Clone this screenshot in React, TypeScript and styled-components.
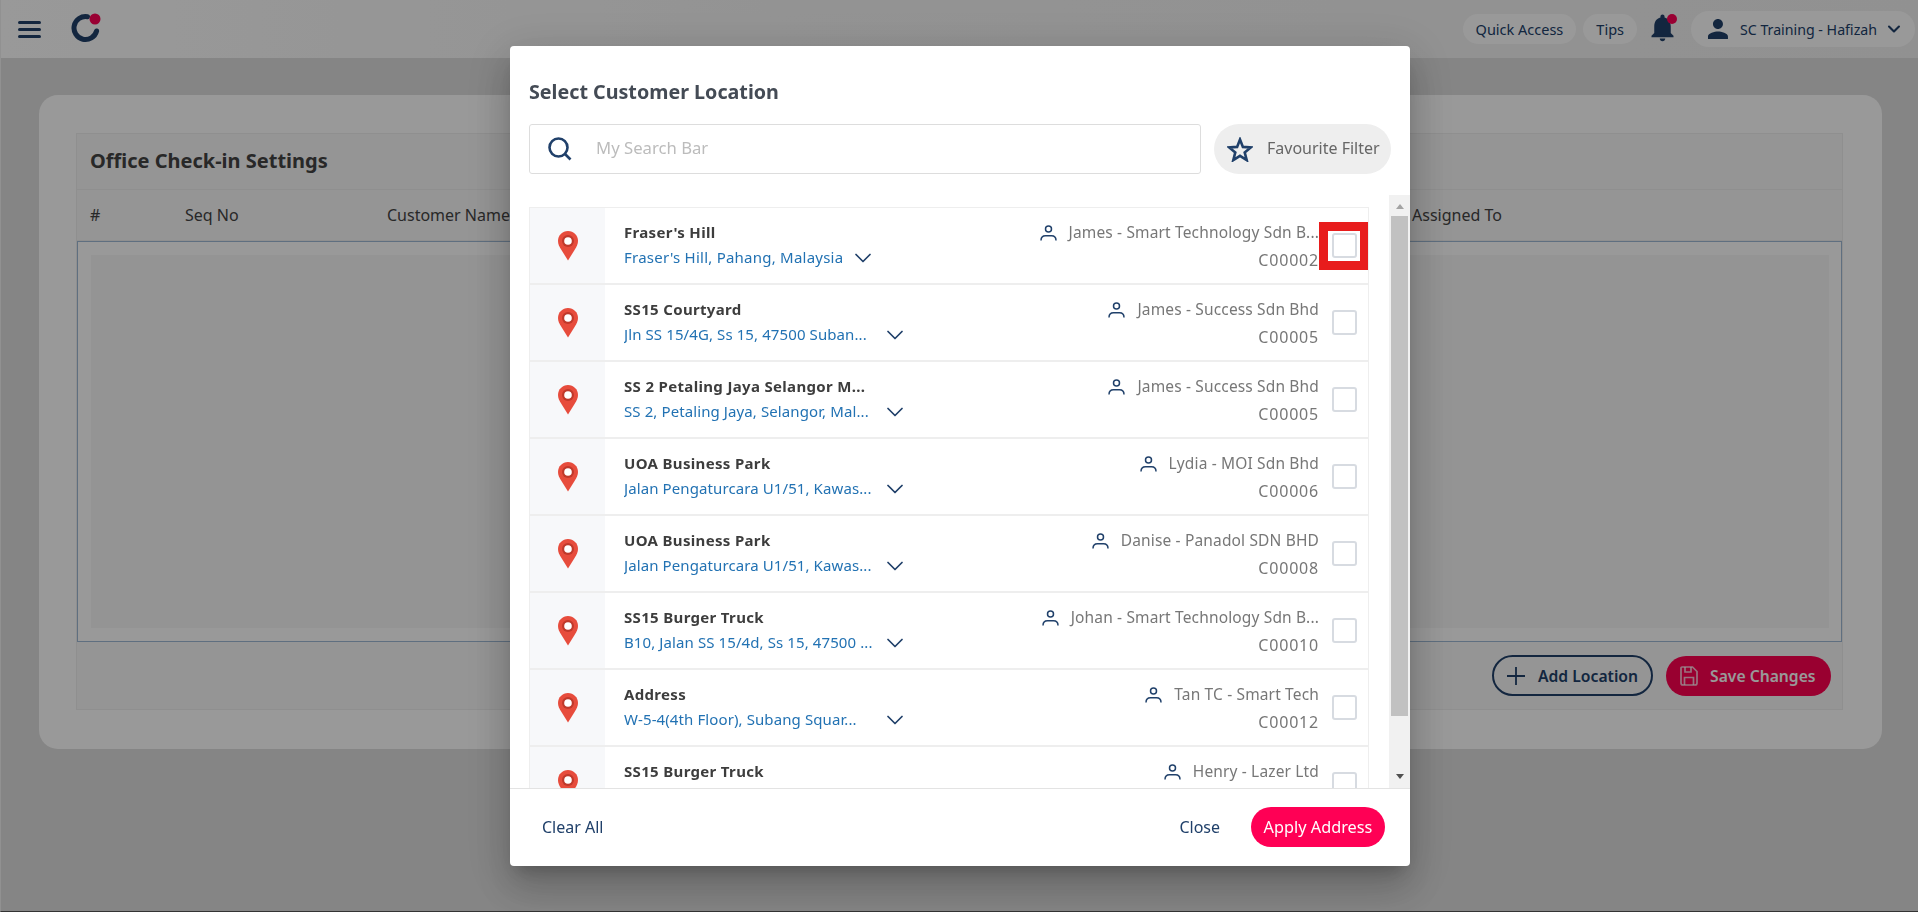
import React from "react";
import styled, { createGlobalStyle } from "styled-components";
import { ChevronDown } from "lucide-react";

const FONT = `"Noto Sans", "Open Sans", sans-serif`;
const NAVY = "#20406a";

const GlobalStyle = createGlobalStyle`
  html, body {
    margin: 0;
    padding: 0;
    background: #dedede;
    font-family: ${FONT};
  }
  * { box-sizing: border-box; }
`;

const Shell = styled.div`
  width: 1918px;
  height: 912px;
  overflow: hidden;
  background: #dedede;
  border-left: 1px solid #f2f2f2;
  border-bottom: 1px solid #555;
`;

const TopBar = styled.header`
  height: 58px;
  background: linear-gradient(90deg, #ffffff 0%, #f6f6f6 40%, #f2f2f2 100%);
  display: flex;
  align-items: center;
  padding: 0 3px 0 17px;
`;

const MenuButton = styled.div`
  display: flex;
  flex-direction: column;
  gap: 4px;
  width: 23px;
  margin-right: 30px;
`;

const MenuLine = styled.span`
  height: 3px;
  border-radius: 2px;
  background: ${NAVY};
`;

const TopActions = styled.div`
  margin-left: auto;
  display: flex;
  align-items: center;
`;

const TopPill = styled.div`
  height: 30px;
  padding: 0 13px;
  border-radius: 15px;
  background: #ffffff;
  color: ${NAVY};
  font-size: 14.5px;
  display: flex;
  align-items: center;
  margin-right: 7px;
`;

const BellWrap = styled.div`
  position: relative;
  width: 33px;
  height: 33px;
  margin: -3px 12px 0 2px;
  color: ${NAVY};
`;

const BellDot = styled.span`
  position: absolute;
  top: 3px;
  left: 21px;
  width: 10px;
  height: 10px;
  border-radius: 50%;
  background: #ff0055;
`;

const UserPill = styled.div`
  height: 36px;
  width: 224px;
  padding: 0 11px 0 12px;
  border-radius: 18px;
  background: #ffffff;
  color: ${NAVY};
  font-size: 14.2px;
  white-space: nowrap;
  display: flex;
  align-items: center;
  gap: 7px;
`;

const UserChevron = styled(ChevronDown)`
  margin-left: auto;
`;

const Page = styled.main`
  padding: 37px 36px 0 38px;
`;

const Card = styled.section`
  height: 654px;
  padding: 38px 39px 39px 37px;
  border-radius: 19px;
  background: #ffffff;
`;

const Panel = styled.div`
  height: 577px;
  border: 1px solid #eeeeee;
  background: #f8f8f8;
  display: flex;
  flex-direction: column;
`;

const PanelTitle = styled.h2`
  margin: 0;
  height: 56px;
  padding: 0 0 2px 13px;
  display: flex;
  align-items: center;
  font-size: 20px;
  font-weight: 700;
  color: #444;
  border-bottom: 1px solid #eeeeee;
`;

const ColumnRow = styled.div`
  height: 51px;
  padding-left: 13px;
  display: grid;
  grid-template-columns: 95px 202px 1025px 1fr;
  align-items: center;
  font-size: 16px;
  color: #444;
  border-bottom: 1px solid #eeeeee;
`;

const TableBody = styled.div`
  height: 401px;
  padding: 13px 12px 13px 13px;
  border: 1px solid #9eb9d5;
  background: #ffffff;
`;

const TablePlaceholder = styled.div`
  height: 100%;
  background: #f7f7f7;
`;

const PanelFooter = styled.div`
  flex: 1;
  display: flex;
  align-items: center;
  justify-content: flex-end;
  gap: 13px;
  padding-right: 11px;
`;

const AddButton = styled.div`
  height: 41px;
  width: 161px;
  border: 2px solid ${NAVY};
  border-radius: 21px;
  display: flex;
  align-items: center;
  gap: 12px;
  padding-left: 12px;
  font-size: 15.7px;
  font-weight: 600;
  color: ${NAVY};
`;

const SaveButton = styled.div`
  height: 40px;
  width: 165px;
  border-radius: 20px;
  background: #ff0050;
  display: flex;
  align-items: center;
  gap: 12px;
  padding-left: 14px;
  font-size: 15.7px;
  font-weight: 600;
  color: #ffffff;
`;

const Overlay = styled.div`
  position: fixed;
  inset: 0;
  padding-left: 2px;
  background: rgba(0, 0, 0, 0.4);
  display: flex;
  align-items: center;
  justify-content: center;
`;

const Modal = styled.div`
  width: 900px;
  height: 820px;
  background: #fff;
  border-radius: 4px;
  display: flex;
  flex-direction: column;
  overflow: hidden;
  box-shadow: 0 11px 15px -7px rgba(0, 0, 0, 0.2), 0 24px 38px 3px rgba(0, 0, 0, 0.14),
    0 9px 46px 8px rgba(0, 0, 0, 0.12);
`;

const ModalTitle = styled.h1`
  margin: 0;
  padding: 30px 19px 0;
  height: 78px;
  font-size: 19.7px;
  line-height: 32px;
  font-weight: 700;
  color: #444b55;
`;

const SearchRow = styled.div`
  height: 71px;
  padding: 0 19px;
  display: flex;
  gap: 13px;
  align-items: flex-start;
`;

const SearchBox = styled.div`
  flex: 1;
  height: 50px;
  border: 1px solid #dddddd;
  border-radius: 3px;
  display: flex;
  align-items: center;
  gap: 24px;
  padding-left: 18px;
  font-size: 16.7px;
  line-height: 22px;
  color: #bcbcbc;
`;

const SearchText = styled.span`
  margin-top: -2px;
`;

const FavouriteButton = styled.div`
  width: 177px;
  height: 50px;
  border-radius: 25px;
  background: #eeeeee;
  display: flex;
  align-items: center;
  gap: 14px;
  padding-left: 13px;
  font-size: 16px;
  color: #666;
  white-space: nowrap;
`;

const ScrollArea = styled.div`
  height: 593px;
  padding-left: 19px;
  display: flex;
`;

const List = styled.ul`
  list-style: none;
  margin: 12px 0 0;
  padding: 0;
  width: 840px;
  overflow: hidden;
  border-top: 1px solid #eeeeee;
  border-left: 1px solid #eeeeee;
  border-right: 1px solid #eeeeee;
`;

const Row = styled.li`
  height: 77px;
  display: flex;
  border-bottom: 2px solid #eeeeee;
`;

const PinCell = styled.div`
  width: 75px;
  background: #f7f8fa;
  display: flex;
  align-items: center;
  justify-content: center;
`;

const RowMain = styled.div`
  flex: 1;
  min-width: 0;
  padding: 11px 0 0 19px;
`;

const RowName = styled.div`
  font-size: 15px;
  letter-spacing: 0.33px;
  line-height: 26px;
  font-weight: 700;
  color: #3d3d3d;
  white-space: nowrap;
`;

const AddressLine = styled.div`
  display: flex;
  align-items: center;
  gap: 6px;
  height: 25px;
  color: ${NAVY};
`;

const Address = styled.span<{ $clipped?: boolean }>`
  font-size: 15px;
  line-height: 25px;
  color: #2272b3;
  white-space: nowrap;
  overflow: hidden;
  ${({ $clipped }) => ($clipped ? "width: 251px; letter-spacing: 0.1px;" : "letter-spacing: 0.23px;")}
`;

const RowOwner = styled.div`
  padding-top: 12px;
  display: flex;
  flex-direction: column;
  align-items: flex-end;
  font-size: 15.5px;
  letter-spacing: 0.15px;
  line-height: 25px;
  color: #777777;
  white-space: nowrap;
`;

const OwnerName = styled.div`
  display: flex;
  align-items: center;
  gap: 12px;
  height: 25px;
`;

const OwnerCode = styled.div`
  margin-top: 3px;
  font-size: 16px;
  letter-spacing: 0.8px;
`;

const CheckCell = styled.div`
  position: relative;
  width: 49px;
  padding-left: 13px;
  display: flex;
  align-items: center;
`;

const CheckBox = styled.span`
  width: 25px;
  height: 25px;
  border: 2px solid #d7dbe1;
  border-radius: 3px;
  background: #fff;
`;

/* red annotation box from the screenshot, sits over the first checkbox */
const Highlight = styled.span`
  position: absolute;
  left: 0;
  top: 14px;
  width: 50px;
  height: 48px;
  border: 9px solid #e81c1c;
`;

const ScrollTrack = styled.div`
  width: 21px;
  margin-left: 20px;
  background: #f1f1f1;
  display: flex;
  flex-direction: column;
  align-items: center;
`;

const ScrollArrow = styled.span<{ $down?: boolean }>`
  width: 0;
  height: 0;
  margin: ${({ $down }) => ($down ? "auto 0 9px" : "9px 0 7px")};
  border-left: 4px solid transparent;
  border-right: 4px solid transparent;
  ${({ $down }) => ($down ? "border-top: 5px solid #505050;" : "border-bottom: 5px solid #a3a3a3;")}
`;

const ScrollThumb = styled.div`
  width: 17px;
  height: 500px;
  background: #c1c1c1;
`;

const ModalFooter = styled.footer`
  flex: 1;
  border-top: 1px solid #e3e3e3;
  display: flex;
  align-items: center;
  padding: 0 25px 2px 32px;
  font-size: 16px;
  color: ${NAVY};
`;

const ClearAll = styled.span`
  margin-right: auto;
`;

const CloseText = styled.span`
  margin-right: 31px;
`;

const ApplyButton = styled.div`
  width: 134px;
  height: 40px;
  border-radius: 20px;
  background: #ff0055;
  color: #fff;
  font-size: 16.3px;
  white-space: nowrap;
  display: flex;
  align-items: center;
  justify-content: center;
`;

function Logo() {
  return (
    <svg width="32" height="32" viewBox="0 0 32 32">
      <path d="M16.5 3.7A11.5 11.5 0 1 0 25.6 18" fill="none" stroke={NAVY} strokeWidth="5" strokeLinecap="round" />
      <circle cx="24" cy="6" r="5.5" fill="#ff0055" />
    </svg>
  );
}

function Pin() {
  return (
    <svg width="20" height="30" viewBox="0 0 20 30">
      <path d="M10 0C4.5 0 0 4.4 0 9.9c0 3.2 1.3 5.6 3 8.4L10 29.5l7-11.2c1.7-2.8 3-5.2 3-8.4C20 4.4 15.5 0 10 0z" fill="#e74c3c" />
      <circle cx="10" cy="10" r="6" fill="#c0392b" />
      <circle cx="10" cy="10" r="3.8" fill="#fff" />
    </svg>
  );
}

function PersonOutline() {
  return (
    <svg width="17" height="16" viewBox="0 0 17 16" fill="none" stroke={NAVY} strokeWidth="1.5">
      <circle cx="8.5" cy="4" r="3" />
      <path d="M1 15.5c0-3 2-4.8 4.5-4.8h6c2.5 0 4.5 1.8 4.5 4.8" />
    </svg>
  );
}

function SearchIcon() {
  return (
    <svg width="24" height="24" viewBox="0 0 24 24" fill="none" stroke={NAVY} strokeWidth="2.6">
      <circle cx="10.5" cy="10.5" r="9" />
      <path d="M17 17l5.5 5.5" />
    </svg>
  );
}

function StarIcon() {
  return (
    <svg width="26" height="25" viewBox="0 0 26 25" fill="none" stroke={NAVY} strokeWidth="2.6">
      <path d="M13 2.5l2.9 7.4 7.9.5-6.1 5 2 7.7-6.7-4.3-6.7 4.3 2-7.7-6.1-5 7.9-.5z" />
    </svg>
  );
}

function PlusIcon() {
  return (
    <svg width="20" height="20" viewBox="0 0 20 20" stroke={NAVY} strokeWidth="1.8">
      <path d="M10 1v18M1 10h18" />
    </svg>
  );
}

function SaveIcon() {
  return (
    <svg width="18" height="20" viewBox="0 0 18 20" fill="none" stroke="#fff" strokeOpacity="0.75" strokeWidth="1.7">
      <path d="M2 1h10.5L17 5.5V17a2 2 0 0 1-2 2H3a2 2 0 0 1-2-2V2a1 1 0 0 1 1-1z" />
      <path d="M5 1v5h6V1M4.5 19v-7.5h9V19" />
    </svg>
  );
}

function BellIcon() {
  return (
    <svg width="33" height="33" viewBox="0 0 24 24" fill="currentColor">
      <path d="M12 22c1.1 0 2-.9 2-2h-4c0 1.1.89 2 2 2zm6-6v-5c0-3.07-1.64-5.64-4.5-6.32V4c0-.83-.67-1.5-1.5-1.5s-1.5.67-1.5 1.5v.68C7.63 5.36 6 7.92 6 11v5l-2 2v1h16v-1l-2-2z" />
    </svg>
  );
}

function PersonSolid() {
  return (
    <svg width="30" height="30" viewBox="0 0 24 24" fill={NAVY}>
      <path d="M12 12c2.21 0 4-1.79 4-4s-1.79-4-4-4-4 1.79-4 4 1.79 4 4 4zm0 2c-2.67 0-8 1.34-8 4v2h16v-2c0-2.66-5.33-4-8-4z" />
    </svg>
  );
}

const locations = [
  { name: "Fraser's Hill", address: "Fraser's Hill, Pahang, Malaysia", owner: "James - Smart Technology Sdn B...", code: "C00002", clipped: false },
  { name: "SS15 Courtyard", address: "Jln SS 15/4G, Ss 15, 47500 Suban...", owner: "James - Success Sdn Bhd", code: "C00005", clipped: true },
  { name: "SS 2 Petaling Jaya Selangor M...", address: "SS 2, Petaling Jaya, Selangor, Mal...", owner: "James - Success Sdn Bhd", code: "C00005", clipped: true },
  { name: "UOA Business Park", address: "Jalan Pengaturcara U1/51, Kawas...", owner: "Lydia - MOI Sdn Bhd", code: "C00006", clipped: true },
  { name: "UOA Business Park", address: "Jalan Pengaturcara U1/51, Kawas...", owner: "Danise - Panadol SDN BHD", code: "C00008", clipped: true },
  { name: "SS15 Burger Truck", address: "B10, Jalan SS 15/4d, Ss 15, 47500 ...", owner: "Johan - Smart Technology Sdn B...", code: "C00010", clipped: true },
  { name: "Address", address: "W-5-4(4th Floor), Subang Squar...", owner: "Tan TC - Smart Tech", code: "C00012", clipped: true },
  // the last row runs under the footer, only its first line shows
  { name: "SS15 Burger Truck", address: "", owner: "Henry - Lazer Ltd", code: "", clipped: true },
];

export default function App() {
  return (
    <>
      <GlobalStyle />
      <Shell>
        <TopBar>
          <MenuButton>
            <MenuLine />
            <MenuLine />
            <MenuLine />
          </MenuButton>
          <Logo />
          <TopActions>
            <TopPill>Quick Access</TopPill>
            <TopPill>Tips</TopPill>
            <BellWrap>
              <BellIcon />
              <BellDot />
            </BellWrap>
            <UserPill>
              <PersonSolid />
              SC Training - Hafizah
              <UserChevron size={20} strokeWidth={2.5} />
            </UserPill>
          </TopActions>
        </TopBar>
        <Page>
          <Card>
            <Panel>
              <PanelTitle>Office Check-in Settings</PanelTitle>
              <ColumnRow>
                <span>#</span>
                <span>Seq No</span>
                <span>Customer Name</span>
                <span>Assigned To</span>
              </ColumnRow>
              <TableBody>
                <TablePlaceholder />
              </TableBody>
              <PanelFooter>
                <AddButton>
                  <PlusIcon />
                  Add Location
                </AddButton>
                <SaveButton>
                  <SaveIcon />
                  Save Changes
                </SaveButton>
              </PanelFooter>
            </Panel>
          </Card>
        </Page>
      </Shell>
      <Overlay>
        <Modal>
          <ModalTitle>Select Customer Location</ModalTitle>
          <SearchRow>
            <SearchBox>
              <SearchIcon />
              <SearchText>My Search Bar</SearchText>
            </SearchBox>
            <FavouriteButton>
              <StarIcon />
              <SearchText>Favourite Filter</SearchText>
            </FavouriteButton>
          </SearchRow>
          <ScrollArea>
            <List>
              {locations.map((loc, i) => (
                <Row key={i}>
                  <PinCell>
                    <Pin />
                  </PinCell>
                  <RowMain>
                    <RowName>{loc.name}</RowName>
                    {loc.address && (
                      <AddressLine>
                        <Address $clipped={loc.clipped}>{loc.address}</Address>
                        <ChevronDown size={28} strokeWidth={1.5} />
                      </AddressLine>
                    )}
                  </RowMain>
                  <RowOwner>
                    <OwnerName>
                      <PersonOutline />
                      {loc.owner}
                    </OwnerName>
                    {loc.code && <OwnerCode>{loc.code}</OwnerCode>}
                  </RowOwner>
                  <CheckCell>
                    <CheckBox />
                    {i === 0 && <Highlight />}
                  </CheckCell>
                </Row>
              ))}
            </List>
            <ScrollTrack>
              <ScrollArrow />
              <ScrollThumb />
              <ScrollArrow $down />
            </ScrollTrack>
          </ScrollArea>
          <ModalFooter>
            <ClearAll>Clear All</ClearAll>
            <CloseText>Close</CloseText>
            <ApplyButton>Apply Address</ApplyButton>
          </ModalFooter>
        </Modal>
      </Overlay>
    </>
  );
}
